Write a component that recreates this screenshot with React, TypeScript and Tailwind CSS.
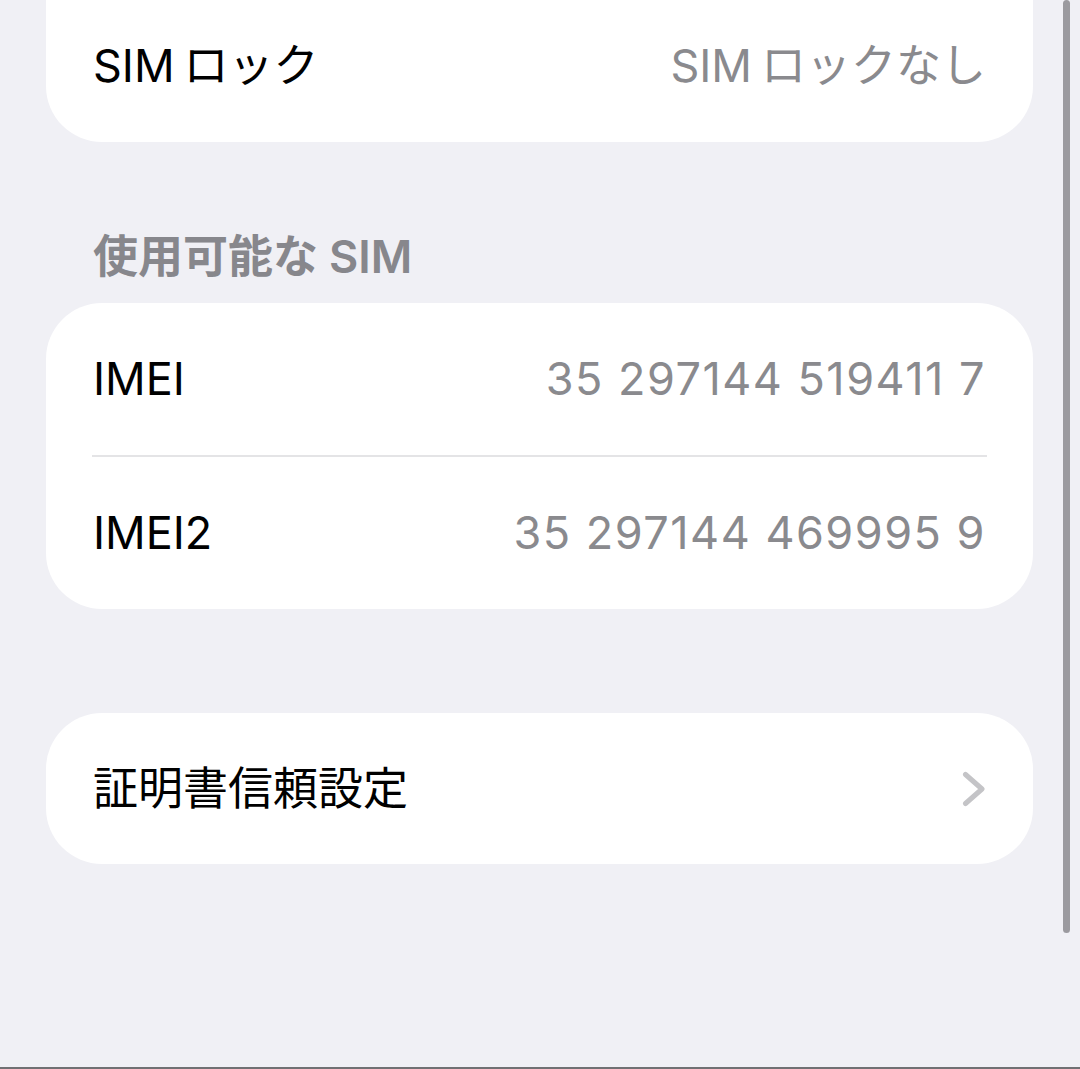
import React from 'react';

const font = { fontFamily: 'Inter, "Noto Sans CJK JP", sans-serif' };

function Chevron() {
    return (
        <svg width="24" height="36" viewBox="0 0 24 36" fill="none">
            <polyline
                points="3.5,3.5 20,18 3.5,32.5"
                stroke="#c4c4c7"
                strokeWidth="5"
                strokeLinecap="round"
                strokeLinejoin="round"
            />
        </svg>
    );
}

function Row({ label, value }: { label: string; value: string }) {
    return (
        <div className="flex h-[152px] items-center justify-between px-[47px] text-[45px]">
            <span className="text-black">{label}</span>
            <span className="tracking-[1.5px] text-[#8a8a8e]">{value}</span>
        </div>
    );
}

export default function App() {
    return (
        <div className="relative flex h-[1069px] w-[1080px] flex-col overflow-hidden bg-[#f0f0f5]" style={font}>
            <div className="pl-[46px] pr-[47px]">
                {/* top card, cut off by the screen edge */}
                <div className="flex h-[142px] items-center justify-between rounded-b-[56px] bg-white px-[47px] pb-[10px] text-[45px]">
                    <span className="text-black">
                        <span className="mr-[9px]">SIM</span>ロック
                    </span>
                    <span className="text-[#8a8a8e]">
                        <span className="mr-[9px]">SIM</span>ロックなし
                    </span>
                </div>

                <div className="mb-[20px] mt-[89px] h-[52px] px-[47px] text-[45px] font-semibold leading-[52px] text-[#87878c]">
                    使用可能な<span className="ml-[11px]">SIM</span>
                </div>

                <div className="rounded-[56px] bg-white">
                    <Row label="IMEI" value="35 297144 519411 7" />
                    <div className="mx-[46px] h-[2px] bg-[#e4e4e6]" />
                    <Row label="IMEI2" value="35 297144 469995 9" />
                </div>

                <div className="mt-[104px] rounded-[56px] bg-white">
                    <div className="flex h-[151px] items-center justify-between px-[47px] text-[45px]">
                        <span className="text-black">証明書信頼設定</span>
                        <Chevron />
                    </div>
                </div>
            </div>

            <div className="mt-auto h-[2px] bg-[#707073]" />

            {/* scroll indicator */}
            <div className="absolute right-[10px] top-0 h-[933px] w-[7px] rounded-full bg-[#9b9a9f]" />
        </div>
    );
}
